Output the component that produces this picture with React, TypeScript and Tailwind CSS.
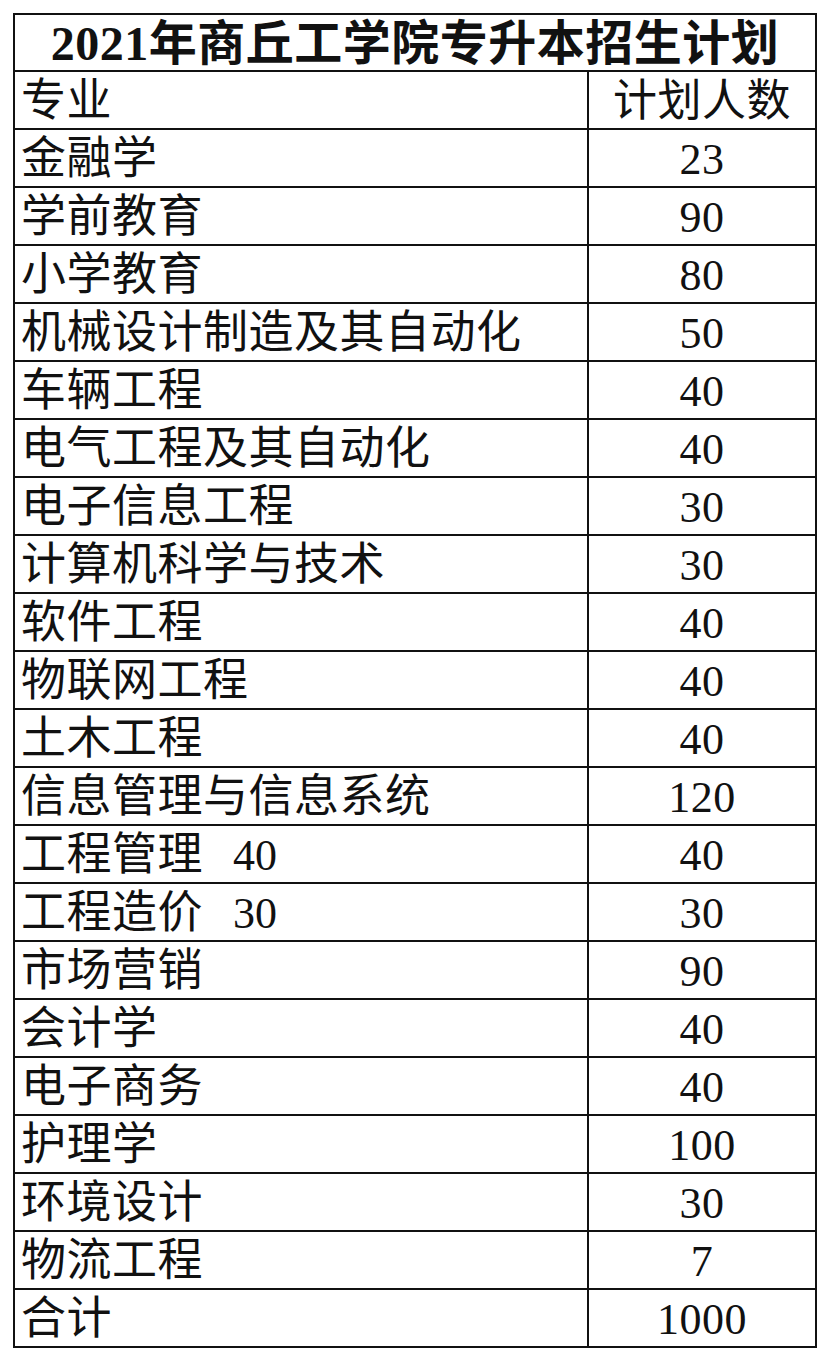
import React from 'react';

const rows: [string, string, string?][] = [
  ['金融学', '23'],
  ['学前教育', '90'],
  ['小学教育', '80'],
  ['机械设计制造及其自动化', '50'],
  ['车辆工程', '40'],
  ['电气工程及其自动化', '40'],
  ['电子信息工程', '30'],
  ['计算机科学与技术', '30'],
  ['软件工程', '40'],
  ['物联网工程', '40'],
  ['土木工程', '40'],
  ['信息管理与信息系统', '120'],
  ['工程管理', '40', '40'],
  ['工程造价', '30', '30'],
  ['市场营销', '90'],
  ['会计学', '40'],
  ['电子商务', '40'],
  ['护理学', '100'],
  ['环境设计', '30'],
  ['物流工程', '7'],
  ['合计', '1000'],
];

const font = "font-['Liberation_Serif','Noto_Sans_CJK_SC',serif]";

export default function App() {
  return (
    <div className={`min-h-[1356px] w-[826px] bg-white pt-[13px] pl-[13px] text-[#111] ${font}`}>
      <div className="w-[804px] border-2 border-[#111]">
        <div className="flex h-[57px] items-center justify-center border-b-2 border-[#111] pt-[2px]">
          <span className="text-[48px] font-bold leading-none tracking-[0.5px]">2021年商丘工学院专升本招生计划</span>
        </div>
        <Row name="专业" value="计划人数" />
        {rows.map(([name, value, extra], i) => (
          <Row key={name} name={name} value={value} extra={extra} last={i === rows.length - 1} />
        ))}
      </div>
    </div>
  );
}

function Row({ name, value, extra, last }: { name: string; value: string; extra?: string; last?: boolean }) {
  return (
    <div className={last ? 'flex h-[56px]' : 'flex h-[58px] border-b-2 border-[#111]'}>
      <div className="flex w-[574px] items-center border-r-2 border-[#111] pl-[6px] pt-[3px]">
        <span className="text-[45px] leading-none tracking-[0.5px]">{name}</span>
        {extra && <span className="ml-[30px] text-[44px] leading-none">{extra}</span>}
      </div>
      <div className="flex flex-1 items-center justify-center pt-[3px]">
        <span className={value.length > 4 ? 'text-[44px] leading-none' : 'text-[44px] leading-none tracking-[0.5px]'}>{value}</span>
      </div>
    </div>
  );
}
